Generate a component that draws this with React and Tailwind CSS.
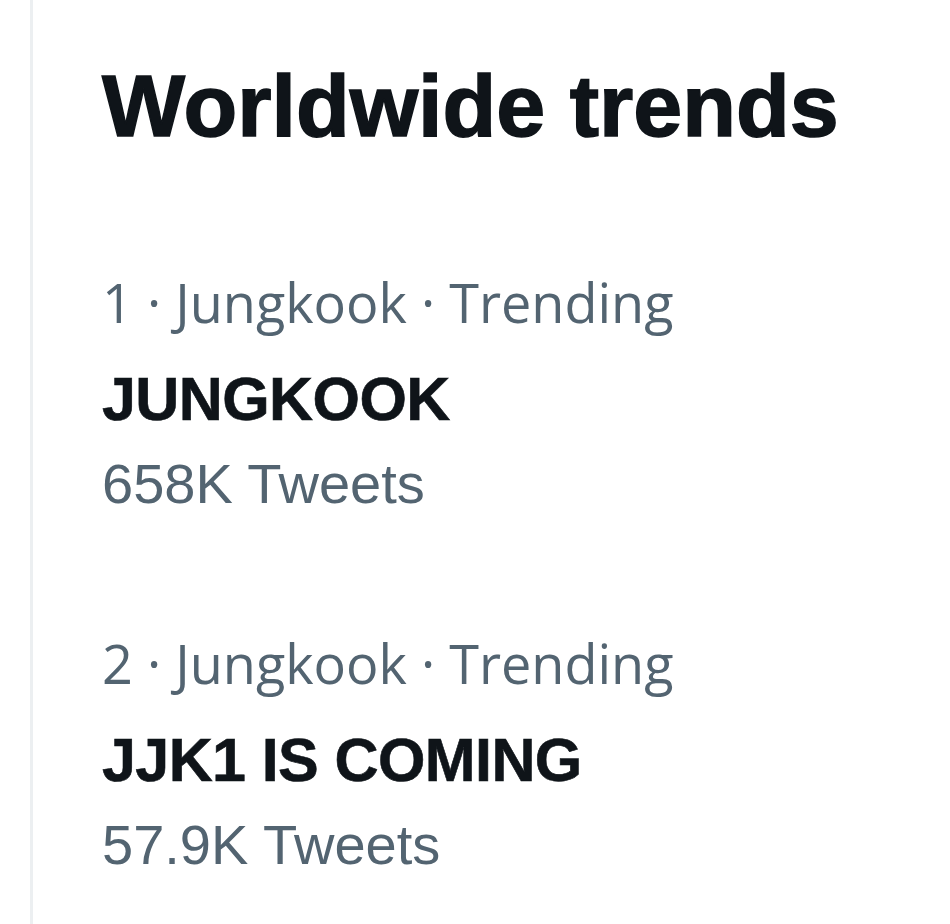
import React from "react";

const trends = [
  { rank: 1, context: "Jungkook", title: "JUNGKOOK", count: "658K Tweets" },
  { rank: 2, context: "Jungkook", title: "JJK1 IS COMING", count: "57.9K Tweets" },
];

function TrendRow({ trend }) {
  return (
    <div className="flex flex-col">
      <div className="text-[54px] leading-[64px] text-[#536471] font-['Open_Sans',sans-serif]">
        {trend.rank} · {trend.context} · Trending
      </div>
      <div className="mt-[29px] text-[61px] leading-[72px] font-bold text-[#0f1419] tracking-[-0.6px] [-webkit-text-stroke:0.6px_#0f1419] font-['Liberation_Sans',Arial,sans-serif]">
        {trend.title}
      </div>
      <div className="mt-[15px] text-[56px] leading-[68px] text-[#536471] font-['Liberation_Sans',Arial,sans-serif]">
        {trend.count}
      </div>
    </div>
  );
}

export default function App() {
  return (
    <div className="min-h-screen bg-white pl-[30px]">
      <div className="min-h-screen border-l-[3px] border-[#eceff1] pl-[69px] pt-[56px]">
        {/* Header */}
        <h1 className="text-[88px] leading-[100px] font-black text-[#0f1419] [-webkit-text-stroke:1.5px_#0f1419] font-['Liberation_Sans',Arial,sans-serif]">
          Worldwide trends
        </h1>

        {/* Trends */}
        <div className="mt-[114px] flex flex-col gap-[113px]">
          {trends.map((t) => (
            <TrendRow key={t.rank} trend={t} />
          ))}
        </div>
      </div>
    </div>
  );
}
